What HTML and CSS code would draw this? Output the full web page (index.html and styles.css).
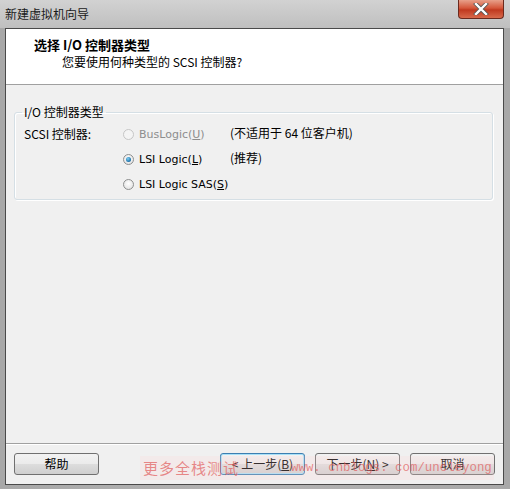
FILE: index.html
```html
<!DOCTYPE html>
<html lang="zh">
<head>
<meta charset="utf-8">
<link rel="stylesheet" href="styles.css">
</head>
<body>
<div class="window">
  <div class="titlebar">
    <span class="title">新建虚拟机向导</span>
    <div class="close">
      <svg width="16" height="12" viewBox="0 0 16 12"><path d="M3 1 L13 11 M13 1 L3 11" stroke="#555" stroke-width="4" stroke-linecap="square"/><path d="M3 1 L13 11 M13 1 L3 11" stroke="#fff" stroke-width="2.4" stroke-linecap="square"/></svg>
    </div>
  </div>
  <div class="client">
    <div class="header">
      <div class="h-title">选择 I/O 控制器类型</div>
      <div class="h-sub">您要使用何种类型的 SCSI 控制器?</div>
    </div>
    <div class="content">
      <fieldset class="group">
        <legend>I/O 控制器类型</legend>
        <div class="grid">
          <div class="label">SCSI 控制器:</div>
          <div class="opt disabled"><span class="radio"></span>BusLogic(<u>U</u>)</div>
          <div class="note">(不适用于 64 位客户机)</div>
          <div></div>
          <div class="opt"><span class="radio checked"></span>LSI Logic(<u>L</u>)</div>
          <div class="note">(推荐)</div>
          <div></div>
          <div class="opt wide"><span class="radio"></span>LSI Logic SAS(<u>S</u>)</div>
        </div>
      </fieldset>
    </div>
    <div class="footer">
      <button class="btn">帮助</button>
      <div class="right">
        <button class="btn focus">&lt; 上一步(<u>B</u>)</button>
        <button class="btn">下一步(<u>N</u>) &gt;</button>
        <button class="btn">取消</button>
      </div>
      <div class="watermark"><span class="wm-cn">更多全栈测试</span><span class="wm-en">www. cnblogs. com/uncleyong</span></div>
    </div>
  </div>
</div>
</body>
</html>
```

FILE: styles.css
```css
html, body { margin: 0; padding: 0; }
body {
  width: 510px; height: 489px; overflow: hidden;
  font-family: "Noto Sans CJK SC", sans-serif;
  font-size: 12px; color: #000;
}
.window {
  width: 510px; height: 489px; box-sizing: border-box;
  background: linear-gradient(90deg, #a8a8a8, #b4b4b4 50%, #a8a8a8);
  padding: 0 6px 4px 5px;
  display: flex; flex-direction: column;
}
.titlebar {
  height: 28px; display: flex; align-items: flex-start;
  background: linear-gradient(180deg, #d2d2d2, #bfbfbf);
  margin: 0 -6px 0 -5px; padding: 0 6px 0 5px;
}
.title {
  font-family: "Noto Sans CJK SC", sans-serif; font-size: 12px;
  line-height: 28px; color: #1a1a1a;
}
.close {
  margin-left: auto; width: 46px; height: 19px;
  border: 1px solid #6b2a1e; border-top: none; border-radius: 0 0 4px 4px;
  background: linear-gradient(180deg, #e8a08a 0%, #d4563a 45%, #c0391f 55%, #d86a4c 100%);
  display: flex; align-items: center; justify-content: center; box-sizing: border-box;
}
.client {
  flex: 1; background: #f0f0f0; border: 1px solid #4a4a4a;
  display: flex; flex-direction: column;
}
.header {
  height: 56px; background: #fff; border-bottom: 1px solid #a0a0a0;
  padding: 7px 0 0 28px; box-sizing: border-box;
}
.h-title {
  font-weight: bold; font-size: 13px; line-height: 18px;
}
.h-sub {
  font-size: 12px; line-height: 16px; margin-left: 28px; margin-top: 0px;
}
.content { flex: 1; padding: 20px 10px 0 8px; }
.group {
  margin: 0; border: 1px solid #d5dfe5; border-radius: 3px;
  box-shadow: inset 1px 1px 0 #fff, 1px 1px 0 #fff;
  padding: 3px 0 8px 9px; height: 95px; box-sizing: border-box;
}
.group legend { padding: 0 2px; margin-left: -2px; line-height: 14px; font-size: 12px; }
.grid {
  display: grid; grid-template-columns: 99px 107px auto;
  grid-auto-rows: 25px; align-items: center;
}
.label { margin-top: -3px; }
.opt {
  display: flex; align-items: center; white-space: nowrap;
  font-family: "DejaVu Sans", sans-serif; font-size: 11px;
}
.opt.wide { grid-column: 2 / 4; }
.note { margin-top: -4px; white-space: nowrap; }
.opt.disabled { color: #8d8d8d; }
.radio {
  width: 11px; height: 11px; border-radius: 50%; box-sizing: border-box;
  border: 1px solid #8e8f8f; margin-right: 5px;
  background: radial-gradient(circle at 50% 40%, #fff, #dcdcdc);
  display: inline-flex; align-items: center; justify-content: center;
}
.disabled .radio { border-color: #c6c6c6; background: #f4f4f4; }
.radio.checked::after {
  content: ""; width: 5px; height: 5px; border-radius: 50%;
  background: radial-gradient(circle at 40% 35%, #7fd0f5, #1a6fa8 70%, #0d4a7a);
}
.footer {
  height: 41px; border-top: 1px solid #a0a0a0; box-shadow: inset 0 1px 0 #fff;
  display: flex; align-items: flex-start; padding: 9px 8px 0 8px; box-sizing: border-box;
  position: relative;
}
.right { margin-left: auto; display: flex; gap: 10px; }
.btn {
  width: 85px; height: 22px; box-sizing: border-box;
  border: 1px solid #707070; border-radius: 3px;
  background: linear-gradient(180deg, #f2f2f2 0%, #ebebeb 49%, #dddddd 51%, #cfcfcf 100%);
  font-family: "Noto Sans CJK SC", sans-serif; font-size: 12px; color: #000;
  padding: 0; line-height: 18px;
}
.btn.focus { border-color: #3c7fb1; box-shadow: inset 0 0 0 1px #a8e0f8; }
.watermark {
  position: absolute; left: 134px; top: 12px; width: 354px; height: 24px;
  background: rgba(255, 215, 215, 0.22);
  color: rgba(225, 95, 95, 0.72);
  line-height: 24px; white-space: nowrap; pointer-events: none;
  display: flex; align-items: center;
}
.wm-cn {
  font-family: "Noto Sans CJK SC", serif; font-size: 15px; margin-left: 3px;
  letter-spacing: 1px;
}
.wm-en {
  font-family: "Liberation Mono", monospace; font-size: 12.4px; margin-left: 52px;
}
```
